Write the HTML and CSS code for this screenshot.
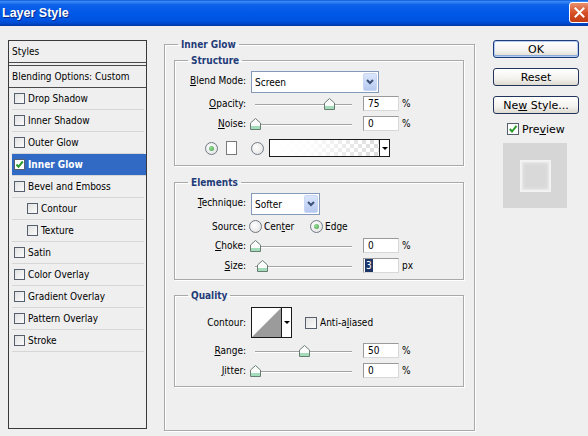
FILE: index.html
```html
<!DOCTYPE html>
<html>
<head>
<meta charset="utf-8">
<title>Layer Style</title>
<link rel="stylesheet" href="styles.css">
</head>
<body>
<div class="window">
  <div class="titlebar">
    <span class="title">Layer Style</span>
    <div class="close"><svg width="11" height="11" viewBox="0 0 11 11"><path d="M1.5 1.5L9.5 9.5M9.5 1.5L1.5 9.5" stroke="#fff" stroke-width="2" stroke-linecap="square"/></svg></div>
  </div>
  <div class="content">
    <div class="styles-panel">
      <div class="sp-head">Styles</div>
      <div class="sp-head2">Blending Options: Custom</div>
      <div class="sp-item"><span class="cb"></span>Drop Shadow</div>
      <div class="sp-item"><span class="cb"></span>Inner Shadow</div>
      <div class="sp-item"><span class="cb"></span>Outer Glow</div>
      <div class="sp-item selected"><span class="cb on"><svg width="9" height="9" viewBox="0 0 9 9"><path d="M1.5 4.5L3.5 6.8L7.8 1.5" fill="none" stroke="#2a9a2a" stroke-width="2"/></svg></span>Inner Glow</div>
      <div class="sp-item"><span class="cb"></span>Bevel and Emboss</div>
      <div class="sp-item sub"><span class="cb"></span>Contour</div>
      <div class="sp-item sub"><span class="cb"></span>Texture</div>
      <div class="sp-item"><span class="cb"></span>Satin</div>
      <div class="sp-item"><span class="cb"></span>Color Overlay</div>
      <div class="sp-item"><span class="cb"></span>Gradient Overlay</div>
      <div class="sp-item"><span class="cb"></span>Pattern Overlay</div>
      <div class="sp-item"><span class="cb"></span>Stroke</div>
    </div>

    <fieldset class="group outer">
      <legend>Inner Glow</legend>

      <fieldset class="group structure">
        <legend>Structure</legend>
        <div class="row sel-row">
          <span class="lbl"><u>B</u>lend Mode:</span>
          <div class="select blend"><span class="sel-text">Screen</span><span class="sel-btn"><svg width="8" height="6" viewBox="0 0 8 6"><path d="M1 1L4 4L7 1" fill="none" stroke="#3d5178" stroke-width="2"/></svg></span></div>
        </div>
        <div class="row num-row mt3">
          <span class="lbl"><u>O</u>pacity:</span>
          <div class="slider"><div class="track"></div><svg class="thumb" style="left:72.5px" width="11" height="12" viewBox="0 0 11 12"><path d="M0.5 11.5V5L5.5 0.5L10.5 5V11.5Z" fill="#fbfbfb" stroke="#6a7d72"/><rect x="1" y="8" width="9" height="3" fill="#a3dcbb"/></svg></div>
          <div class="num">75</div><span class="unit">%</span>
        </div>
        <div class="row num-row mt5">
          <span class="lbl"><u>N</u>oise:</span>
          <div class="slider"><div class="track"></div><svg class="thumb" style="left:-1px" width="11" height="12" viewBox="0 0 11 12"><path d="M0.5 11.5V5L5.5 0.5L10.5 5V11.5Z" fill="#fbfbfb" stroke="#6a7d72"/><rect x="1" y="8" width="9" height="3" fill="#a3dcbb"/></svg></div>
          <div class="num">0</div><span class="unit">%</span>
        </div>
        <div class="row color-row mt8">
          <span class="radio on first"></span>
          <span class="swatch"></span>
          <span class="radio second"></span>
          <div class="grad"><div class="grad-fill"></div><div class="grad-btn"><span class="tri"></span></div></div>
        </div>
      </fieldset>

      <fieldset class="group elements">
        <legend>Elements</legend>
        <div class="row sel-row">
          <span class="lbl"><u>T</u>echnique:</span>
          <div class="select tech"><span class="sel-text">Softer</span><span class="sel-btn"><svg width="8" height="6" viewBox="0 0 8 6"><path d="M1 1L4 4L7 1" fill="none" stroke="#3d5178" stroke-width="2"/></svg></span></div>
        </div>
        <div class="row src-row mt5">
          <span class="lbl">Source:</span>
          <span class="opt center"><span class="radio"></span><span class="opt-text">Cen<u>t</u>er</span></span>
          <span class="opt"><span class="radio on"></span><span class="opt-text">Edge</span></span>
        </div>
        <div class="row num-row mt5">
          <span class="lbl"><u>C</u>hoke:</span>
          <div class="slider"><div class="track"></div><svg class="thumb" style="left:-1px" width="11" height="12" viewBox="0 0 11 12"><path d="M0.5 11.5V5L5.5 0.5L10.5 5V11.5Z" fill="#fbfbfb" stroke="#6a7d72"/><rect x="1" y="8" width="9" height="3" fill="#a3dcbb"/></svg></div>
          <div class="num">0</div><span class="unit">%</span>
        </div>
        <div class="row num-row mt5">
          <span class="lbl"><u>S</u>ize:</span>
          <div class="slider"><div class="track"></div><svg class="thumb" style="left:6px" width="11" height="12" viewBox="0 0 11 12"><path d="M0.5 11.5V5L5.5 0.5L10.5 5V11.5Z" fill="#fbfbfb" stroke="#6a7d72"/><rect x="1" y="8" width="9" height="3" fill="#a3dcbb"/></svg></div>
          <div class="num sel"><span class="hl">3</span></div><span class="unit">px</span>
        </div>
      </fieldset>

      <fieldset class="group quality">
        <legend>Quality</legend>
        <div class="row contour-row">
          <span class="lbl">Contour:</span>
          <div class="contour"><svg width="29" height="29" viewBox="0 0 29 29"><rect width="29" height="29" fill="#fff"/><path d="M0 29L29 0V29Z" fill="#9b9b9b"/></svg><div class="contour-btn"><span class="tri"></span></div></div>
          <span class="cb big aa"></span><span class="cb-text">Anti-a<u>l</u>iased</span>
        </div>
        <div class="row num-row mt5">
          <span class="lbl"><u>R</u>ange:</span>
          <div class="slider"><div class="track"></div><svg class="thumb" style="left:48px" width="11" height="12" viewBox="0 0 11 12"><path d="M0.5 11.5V5L5.5 0.5L10.5 5V11.5Z" fill="#fbfbfb" stroke="#6a7d72"/><rect x="1" y="8" width="9" height="3" fill="#a3dcbb"/></svg></div>
          <div class="num">50</div><span class="unit">%</span>
        </div>
        <div class="row num-row mt5">
          <span class="lbl"><u>J</u>itter:</span>
          <div class="slider"><div class="track"></div><svg class="thumb" style="left:-1px" width="11" height="12" viewBox="0 0 11 12"><path d="M0.5 11.5V5L5.5 0.5L10.5 5V11.5Z" fill="#fbfbfb" stroke="#6a7d72"/><rect x="1" y="8" width="9" height="3" fill="#a3dcbb"/></svg></div>
          <div class="num">0</div><span class="unit">%</span>
        </div>
      </fieldset>
    </fieldset>

    <div class="side">
      <div class="btn default"><span>OK</span></div>
      <div class="btn"><span>Reset</span></div>
      <div class="btn last"><span>Ne<u>w</u> Style...</span></div>
      <div class="preview-row"><span class="cb big on"><svg width="10" height="10" viewBox="0 0 10 10"><path d="M1.8 5L4 7.5L8.5 1.8" fill="none" stroke="#2a9a2a" stroke-width="2"/></svg></span><span>Pre<u>v</u>iew</span></div>
      <div class="preview"><div class="preview-inner"></div></div>
    </div>
  </div>
</div>
</body>
</html>
```

FILE: styles.css
```css
* { box-sizing: border-box; }
html, body { margin: 0; padding: 0; }
body {
  width: 588px;
  height: 436px;
  overflow: hidden;
  background: #efefef;
  font-family: "DejaVu Sans Condensed", "Liberation Sans", sans-serif;
  font-size: 10px;
  color: #000;
}
u { text-decoration: underline; text-underline-offset: 1px; }

.window { width: 588px; height: 436px; display: flex; flex-direction: column; }

/* title bar */
.titlebar {
  height: 26px;
  flex: none;
  display: flex;
  align-items: flex-start;
  justify-content: space-between;
  overflow: hidden;
  background: linear-gradient(to bottom, #0b57d6 0%, #3a8af5 6%, #0e62ea 18%, #0058e8 50%, #0053e0 80%, #0046c8 92%, #00349e 100%);
}
.title {
  font-family: "Liberation Sans", sans-serif;
  font-weight: bold;
  font-size: 12.5px;
  line-height: 14px;
  color: #fff;
  margin: 6px 0 0 2px;
  text-shadow: 1px 1px 0 #0a2a88;
}
.close {
  flex: none;
  width: 21px;
  height: 21px;
  margin: 2px -2px 0 0;
  border: 1px solid #fff;
  border-radius: 3px;
  background: linear-gradient(to bottom, #e9906f, #d54d22 55%, #c03c15);
  display: flex;
  align-items: center;
  justify-content: center;
}

.content { flex: 1; display: flex; align-items: flex-start; padding-top: 12px; }

/* styles list */
.styles-panel {
  flex: none;
  margin: 2px 0 0 8px;
  width: 139px;
  height: 389px;
  border: 1px solid #3a3a3a;
}
.sp-head {
  height: 22px;
  line-height: 21px;
  padding-left: 3px;
  border-bottom: 1px solid #4a4a4a;
}
.sp-head2 {
  height: 23px;
  margin-top: 2px;
  line-height: 21px;
  padding-left: 3px;
  border-top: 1px solid #4a4a4a;
  border-bottom: 1px solid #4a4a4a;
}
.sp-item {
  height: 22px;
  margin: 0 2px 0 3px;
  padding-left: 2px;
  border-bottom: 1px solid #d6d6d6;
  display: flex;
  align-items: center;
  white-space: nowrap;
}
.sp-item.sub { padding-left: 15px; }
.sp-item.selected { background: #316ac5; color: #fff; font-weight: bold; margin-right: 0; }

.cb {
  flex: none;
  width: 11px;
  height: 11px;
  margin-right: 3px;
  border: 1px solid #56606c;
  background: linear-gradient(135deg, #e2e2e2, #fbfbfb);
  display: flex;
  align-items: center;
  justify-content: center;
}
.cb.on { background: #fff; }
.cb.big { width: 12px; height: 12px; }

/* group boxes */
.group {
  margin: 0;
  min-width: 0;
  border: 1px solid #a9a9a9;
  box-shadow: 1px 1px 0 #fff, inset 1px 1px 0 #fff;
}
.group legend {
  font-weight: bold;
  font-size: 10px;
  line-height: 13px;
  color: #1f3c78;
  padding: 0 3px;
  margin-left: 13px;
}
.outer {
  flex: none;
  margin-left: 17px;
  width: 311px;
  height: 393px;
  padding: 3px 10px 0 9px;
}
.outer > legend { margin-left: 4px; }
.structure { padding: 4px 0 8px 0; }
.elements { margin-top: 10px; padding: 4px 0 6px 0; }
.quality { margin-top: 9px; padding: 5px 0 8px 0; }

.row { display: flex; align-items: center; white-space: nowrap; }
.mt3 { margin-top: 3px; }
.mt5 { margin-top: 5px; }
.mt8 { margin-top: 8px; }
.sel-row { height: 22px; }
.num-row { height: 15px; }
.color-row { height: 18px; }
.src-row { height: 13px; }
.contour-row { height: 31px; }

.lbl { flex: none; width: 71px; margin-right: 5px; text-align: right; }
.sel-row .lbl { padding-bottom: 3px; }
.src-row .lbl { margin-right: 3px; }

/* select */
.select {
  height: 22px;
  border: 1px solid #8599bb;
  background: #fff;
  display: flex;
  align-items: center;
  padding: 0 1px 0 3px;
}
.select.blend { width: 128px; }
.select.tech { width: 69px; }
.sel-text { flex: 1; padding-top: 1px; }
.sel-btn {
  flex: none;
  width: 14px;
  height: 18px;
  border: 1px solid #c8d6f4;
  border-radius: 2px;
  background: linear-gradient(to bottom, #dbe6fc, #b6c9f0);
  display: flex;
  align-items: center;
  justify-content: center;
}

/* slider */
.slider { position: relative; flex: none; width: 107px; height: 15px; margin-right: 5px; }
.track {
  margin: 8px 0 0 4px;
  width: 97px;
  height: 2px;
  border-top: 1px solid #a3a3a3;
  border-bottom: 1px solid #fff;
}
.thumb { position: absolute; top: 2px; display: block; }

.num {
  flex: none;
  width: 36px;
  height: 15px;
  border: 1px solid #9a9a9a;
  border-right-color: #d8d8d8;
  border-bottom-color: #d8d8d8;
  background: #fff;
  padding-left: 4px;
  line-height: 13px;
}
.num.sel { padding-left: 1px; }
.hl { display: inline-block; background: #1d3464; color: #fff; padding: 0 1px; line-height: 13px; }
.unit { margin-left: 3px; }

/* radios */
.radio {
  flex: none;
  width: 13px;
  height: 13px;
  border-radius: 50%;
  border: 1px solid #6f7a86;
  background: radial-gradient(circle at 40% 40%, #ffffff, #dedede);
  display: flex;
  align-items: center;
  justify-content: center;
}
.radio.on::after {
  content: "";
  width: 5px;
  height: 5px;
  border-radius: 50%;
  background: radial-gradient(circle at 40% 40%, #9be09b, #3b9a44);
}
.radio.first { margin-left: 30px; }
.swatch { flex: none; width: 11px; height: 14px; margin-left: 8px; border: 1px solid #7a7a7a; background: #fff; }
.radio.second { margin-left: 14px; }
.grad {
  flex: none;
  width: 121px;
  height: 18px;
  margin-left: 5px;
  border: 1px solid #1c1c1c;
  display: flex;
}
.grad-fill {
  flex: 1;
  background:
    linear-gradient(to right, #fff 0%, rgba(255,255,255,0.92) 35%, rgba(255,255,255,0) 100%),
    repeating-conic-gradient(#dcdcdc 0 25%, #ffffff 0 50%) 0 0 / 8px 8px;
}
.grad-btn {
  flex: none;
  width: 10px;
  border-left: 1px solid #1c1c1c;
  background: #fff;
  display: flex;
  align-items: center;
  justify-content: center;
}
.tri {
  width: 0;
  height: 0;
  border-left: 3px solid transparent;
  border-right: 3px solid transparent;
  border-top: 3px solid #000;
}

/* source options */
.opt { display: flex; align-items: center; }
.opt.center { width: 61px; }
.opt-text { margin-left: 2px; }

/* contour */
.contour {
  flex: none;
  width: 41px;
  height: 31px;
  border: 1px solid #1a1a1a;
  background: #fff;
  display: flex;
}
.contour svg { display: block; flex: none; }
.contour-btn {
  flex: 1;
  border-left: 1px solid #1a1a1a;
  display: flex;
  align-items: center;
  justify-content: center;
}
.cb.aa { margin-left: 13px; }
.cb-text { margin-left: 0; }

/* right column */
.side {
  flex: none;
  margin: 2px 0 0 18px;
  width: 86px;
  display: flex;
  flex-direction: column;
  font-family: "DejaVu Sans", sans-serif;
  font-size: 11px;
}
.btn {
  height: 18px;
  margin-bottom: 10px;
  border: 1px solid #22365c;
  border-radius: 3px;
  background: linear-gradient(to bottom, #ffffff, #f3f2ee 60%, #dddad0);
  display: flex;
  align-items: center;
  justify-content: center;
  line-height: 1;
  white-space: nowrap;
}
.btn.default { box-shadow: inset 0 0 0 1px #b5cbf2, inset 0 -1px 0 1px #8aaad8; border-color: #1c3b78; }
.btn.last { margin-bottom: 9px; }
.preview-row { display: flex; align-items: center; height: 12px; padding-left: 14px; }
.preview-row .cb { margin-right: 3px; }
.preview {
  margin: 8px 0 0 10px;
  width: 64px;
  height: 65px;
  background: #d6d6d6;
  display: flex;
  align-items: center;
  justify-content: center;
}
.preview-inner {
  width: 31px;
  height: 32px;
  background: #d9d9d9;
  border: 2px solid #f2f2f2;
  box-shadow: inset 0 0 3px 1px #ececec;
}
```
